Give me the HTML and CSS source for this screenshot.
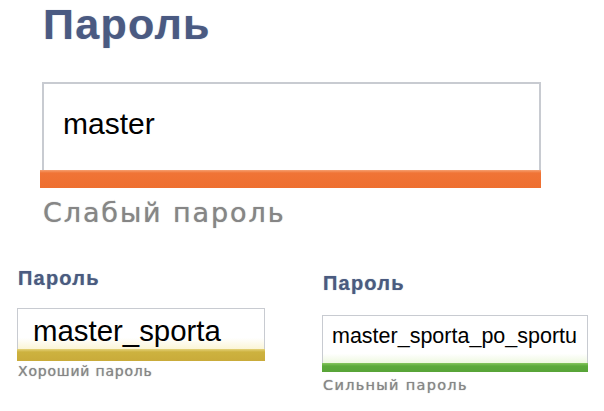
FILE: index.html
```html
<!DOCTYPE html>
<html lang="ru">
<head>
<meta charset="utf-8">
<title>Пароль</title>
<link rel="stylesheet" href="styles.css">
</head>
<body>
<main class="page">
  <section class="hero">
    <h1 class="hero-title">Пароль</h1>
    <div class="field field--weak">
      <div class="input">master</div>
      <div class="bar"></div>
    </div>
    <p class="hint hint--big">Слабый пароль</p>
  </section>
  <section class="pair">
    <div class="col col--good">
      <h2 class="label">Пароль</h2>
      <div class="field field--good">
        <div class="input">master_sporta</div>
        <div class="bar"></div>
      </div>
      <p class="hint hint--small">Хороший пароль</p>
    </div>
    <div class="col col--strong">
      <h2 class="label">Пароль</h2>
      <div class="field field--strong">
        <div class="input">master_sporta_po_sportu</div>
        <div class="bar"></div>
      </div>
      <p class="hint hint--small hint--wide">Сильный пароль</p>
    </div>
  </section>
</main>
</body>
</html>
```
FILE: styles.css
```css
html, body {
  margin: 0;
  padding: 0;
  background: #ffffff;
}
.page {
  width: 604px;
  height: 411px;
  overflow: hidden;
  font-family: "Liberation Sans", Arial, sans-serif;
}
.hero {
  padding-left: 42px;
}
.hero-title {
  margin: 0;
  font-size: 43px;
  line-height: 48px;
  font-weight: bold;
  color: #4a5a82;
  letter-spacing: 1.3px;
  padding-left: 1px;
  text-shadow: 0 0 1px rgba(74, 90, 130, 0.5);
}
.field {
  display: flex;
  flex-direction: column;
}
.input {
  box-sizing: border-box;
  border: 1px solid #c8cbd1;
  border-bottom: none;
  color: #000;
  white-space: nowrap;
}
.field--weak {
  width: 499px;
  margin-top: 34px;
}
.field--weak .input {
  height: 88px;
  border-width: 2px;
  padding: 22px 0 0 19px;
  font-size: 30px;
  line-height: 36px;
}
.field--weak .bar {
  height: 18px;
  margin-left: -2px;
  background: linear-gradient(to bottom, #f6a070 0, #f07436 3px, #ee6f30 100%);
}
.hint {
  margin: 0;
  font-family: "DejaVu Sans", Verdana, sans-serif;
  color: #868686;
  text-shadow: 0 0 1px rgba(110, 110, 110, 0.7);
}
.hint--big {
  margin-top: 10px;
  padding-left: 1px;
  font-size: 27px;
  line-height: 30px;
  letter-spacing: 1.9px;
}
.pair {
  display: flex;
  margin-top: 38px;
}
.col--good {
  width: 248px;
  margin-left: 17px;
}
.col--strong {
  width: 266px;
  margin-left: 57px;
  padding-top: 5px;
}
.label {
  margin: 0;
  font-size: 20px;
  line-height: 24px;
  font-weight: bold;
  color: #4a5b80;
  letter-spacing: 1.2px;
  padding-left: 1px;
  text-shadow: 0 0 1px rgba(74, 91, 128, 0.6);
}
.field--good {
  margin-top: 18px;
}
.field--good .input {
  height: 41px;
  padding: 5px 0 0 15px;
  font-size: 29.4px;
  line-height: 34px;
  background: linear-gradient(to bottom, #ffffff 72%, #fbf5d6 100%);
}
.field--good .bar {
  height: 12px;
  background: linear-gradient(to bottom, #e4d27a 0, #cdb23f 3px, #c9ab3a 100%);
}
.field--strong {
  margin-top: 20px;
}
.field--strong .input {
  height: 48px;
  padding: 7px 0 0 9px;
  font-size: 21.5px;
  line-height: 26px;
  background: linear-gradient(to bottom, #ffffff 80%, #eef8df 100%);
}
.field--strong .bar {
  height: 9px;
  background: linear-gradient(to bottom, #86c65e 0, #5caa3a 3px, #58a438 100%);
}
.hint--small {
  margin-top: 2px;
  padding-left: 1px;
  font-size: 14px;
  line-height: 17px;
  letter-spacing: 0.8px;
}
.hint--wide {
  margin-top: 5px;
  font-size: 14.5px;
  letter-spacing: 1.3px;
}
```
